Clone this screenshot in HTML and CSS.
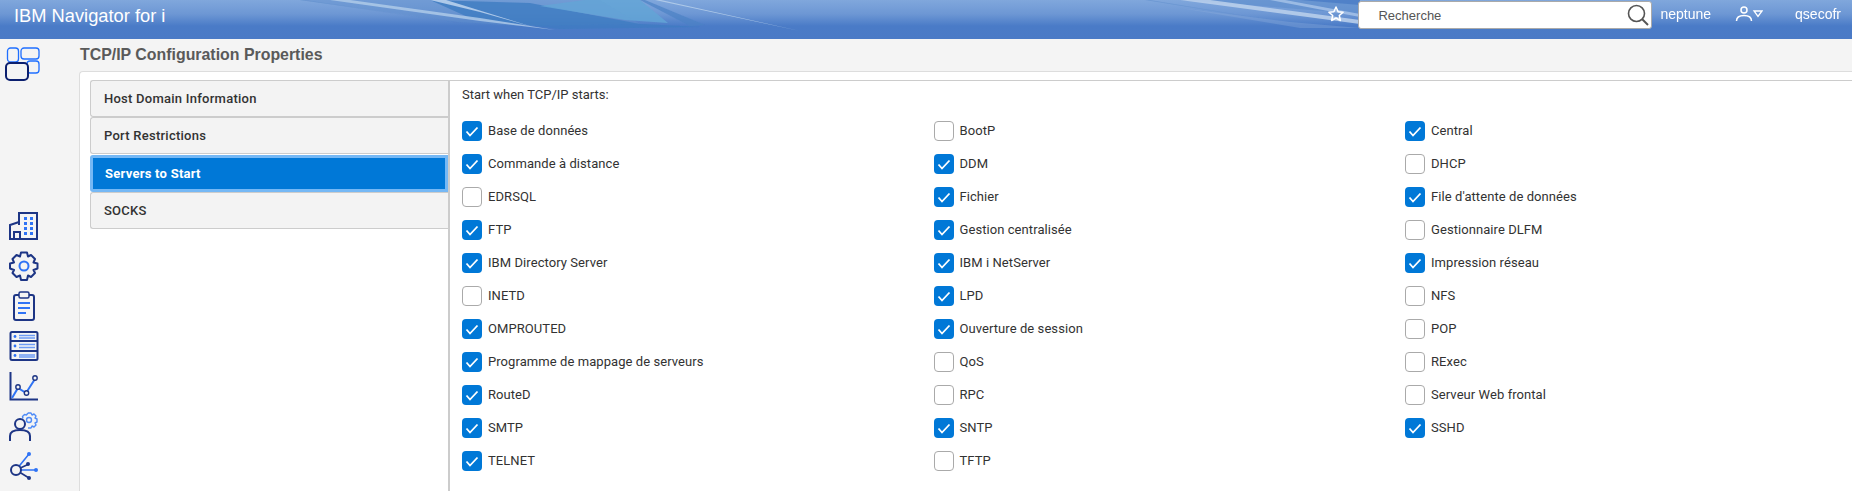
FILE: index.html
```html
<!DOCTYPE html>
<html lang="fr">
    <head>
        <meta charset="UTF-8">
        <title>IBM Navigator for i</title>
        <link rel="stylesheet" href="styles.css">
    </head>

    <body>
        <header class="topbar">
            <svg class="streaks" width="1852" height="39" viewBox="0 0 1852 39">
                <defs>
                    <filter id="soft"><feGaussianBlur stdDeviation="0.6"/></filter>
                </defs>
                <g filter="url(#soft)">
                    <polygon points="300,0 600,0 640,24 520,26 460,22" fill="#5f8fcd" opacity="0.45"/>
                    <polygon points="430,0 530,3 640,24 700,27 560,29 470,18" fill="#3f7cc2" opacity="0.8"/>
                    <polygon points="585,0 640,0 668,23 625,20 540,6" fill="#63a4d6" opacity="0.85"/>
                    <polygon points="640,0 645,0 705,25 690,26" fill="#4b82c4" opacity="0.7"/>
                    <polygon points="655,0 661,0 800,31" fill="#b4cdea" opacity="0.9"/>
                    <polygon points="430,0 446,0 533,27 480,12" fill="#c0d5ee" opacity="0.85"/>
                    <polygon points="330,0 350,0 480,18 555,30 480,21" fill="#b3cdea" opacity="0.8"/>
                    <polygon points="300,0 305,0 460,23" fill="#5f8dcb" opacity="0.5"/>
                    <polygon points="1145,0 1150,0 1300,25" fill="#5f8dcb" opacity="0.6"/>
                    <polygon points="1180,0 1360,0 1360,14 1260,6" fill="#5f8fcd" opacity="0.7"/>
                    <polygon points="1180,0 1210,0 1360,20 1360,24" fill="#bcd1ec" opacity="0.85"/>
                    <polygon points="1270,0 1285,0 1360,14 1360,17" fill="#a9c4e8" opacity="0.8"/>
                    <polygon points="1300,0 1360,0 1360,5" fill="#4a7cc5" opacity="0.8"/>
                    <polygon points="1180,8 1290,22 1360,28 1300,28" fill="#8fb0de" opacity="0.35"/>
                </g>
            </svg>
            <div class="app_title">IBM Navigator for i</div>
            <div class="top_tools">
                <svg class="star" width="18" height="18" viewBox="0 0 18 18">
                    <path d="M9 2l2.100 4.700 5 .5-3.800 3.300 1.100 5L9 13l-4.400 2.500 1.100-5L1.900 7.200l5-.5z" fill="none" stroke="#fff" stroke-width="1.500" stroke-linejoin="round"/>
                </svg>
                <div class="search">
                    <span class="search_text">Recherche</span>
                    <svg width="22" height="22" viewBox="0 0 22 22">
                        <circle cx="9.500" cy="9.500" r="8" fill="none" stroke="#555" stroke-width="1.600"/>
                        <path d="M15 15l6 6" stroke="#555" stroke-width="2"/>
                    </svg>
                </div>
                <span class="host">neptune</span>
                <svg class="user" width="28" height="18" viewBox="0 0 28 18">
                    <circle cx="9" cy="5" r="3" fill="none" stroke="#fff" stroke-width="1.500"/>
                    <path d="M1.500 16c0-4 3-5.500 7.500-5.500s7.500 1.500 7.500 5.500" fill="none" stroke="#fff" stroke-width="1.500"/>
                    <path d="M19 6h8l-4 5.500z" fill="none" stroke="#fff" stroke-width="1.300"/>
                </svg>
                <span class="username">qsecofr</span>
            </div>
        </header>

        <div class="main">
            <nav class="sidebar">
                <svg class="home_icon" width="36" height="34" viewBox="0 0 36 34">
                    <rect x="2.500" y="1" width="11" height="14" rx="3" fill="none" stroke="#1f6fff" stroke-width="1.300"/>
                    <rect x="16" y="1" width="18" height="11" rx="3" fill="none" stroke="#1f6fff" stroke-width="1.300"/>
                    <rect x="22" y="14" width="12" height="12" rx="3" fill="none" stroke="#1f6fff" stroke-width="1.300"/>
                    <rect x="1" y="16" width="22" height="17" rx="4" fill="#f4f4f4" stroke="#0b1f6e" stroke-width="2"/>
                </svg>

                <div class="tool_icons">
                    <svg width="30" height="30" viewBox="0 0 30 30">
                        <path d="M10 14V2h18v26H1V14l9-3" fill="none" stroke="#1d3585" stroke-width="2"/>
                        <path d="M5 28v-7h6v7" fill="none" stroke="#1d3585" stroke-width="2"/>
                        <g fill="#2f73f5">
                            <rect x="15" y="6" width="3" height="3"/><rect x="21" y="6" width="3" height="3"/>
                            <rect x="15" y="11" width="3" height="3"/><rect x="21" y="11" width="3" height="3"/>
                            <rect x="15" y="16" width="3" height="3"/><rect x="21" y="16" width="3" height="3"/>
                            <rect x="15" y="21" width="3" height="3"/><rect x="21" y="21" width="3" height="3"/>
                        </g>
                    </svg>
                    <svg width="30" height="30" viewBox="0 0 30 30">
                        <path d="M12 1.500h6l1 4 3-1.500 4 4-1.500 3.500 4 1v5l-4 1.500 1.500 3-4 4-3-1.500-1 4.500h-6l-1-4.500-3.500 1.500-4-4 1.500-3-4-1.500v-5l4-1-1.500-3.500 4-4 3.500 1.500z" fill="none" stroke="#1d3585" stroke-width="2" stroke-linejoin="round"/>
                        <circle cx="15" cy="15" r="4.500" fill="none" stroke="#2f73f5" stroke-width="2"/>
                    </svg>
                    <svg width="30" height="30" viewBox="0 0 30 30">
                        <rect x="5" y="4" width="20" height="25" rx="2" fill="none" stroke="#1d3585" stroke-width="2"/>
                        <rect x="10" y="1" width="10" height="6" rx="1.500" fill="#f4f4f4" stroke="#1d3585" stroke-width="1.500"/>
                        <path d="M9 12h12M9 17h12M9 22h8" stroke="#2f73f5" stroke-width="2"/>
                    </svg>
                    <svg width="30" height="30" viewBox="0 0 30 30">
                        <rect x="1.500" y="1" width="27" height="28" rx="1.500" fill="none" stroke="#1d3585" stroke-width="2"/>
                        <path d="M1.500 10h27M1.500 20h27" stroke="#1d3585" stroke-width="2"/>
                        <circle cx="6" cy="5.500" r="1.400" fill="#2f73f5"/><circle cx="6" cy="15" r="1.400" fill="#2f73f5"/><circle cx="6" cy="24.500" r="1.400" fill="#2f73f5"/>
                        <path d="M10 4.500h16M10 7h16M10 13.500h16M10 16.500h16M10 24h16M10 26h16" stroke="#6c9bf5" stroke-width="1.300"/>
                    </svg>
                    <svg width="30" height="30" viewBox="0 0 30 30">
                        <path d="M1.500 1v27.500H29" fill="none" stroke="#1d3585" stroke-width="2"/>
                        <path d="M3 27l6-10 8 5 9-14" fill="none" stroke="#2f73f5" stroke-width="2"/>
                        <circle cx="9" cy="16" r="2.200" fill="#f4f4f4" stroke="#1d3585" stroke-width="1.400"/>
                        <circle cx="17.500" cy="22" r="2.200" fill="#f4f4f4" stroke="#1d3585" stroke-width="1.400"/>
                        <circle cx="26" cy="7" r="2.200" fill="#f4f4f4" stroke="#1d3585" stroke-width="1.400"/>
                    </svg>
                    <svg width="30" height="30" viewBox="0 0 30 30">
                        <path d="M19 2l3 0 1 2 2-1 2 2-1 2 2 1v3l-2 1 1 2-2 2-2-1-1 2h-3" fill="none" stroke="#4f8cf7" stroke-width="1.400" stroke-linejoin="round"/>
                        <path d="M19 2l-1.500 2-2-.5-2 2 .5 2" fill="none" stroke="#4f8cf7" stroke-width="1.400"/>
                        <circle cx="20" cy="9" r="2.500" fill="none" stroke="#4f8cf7" stroke-width="1.400"/>
                        <circle cx="11" cy="13" r="5" fill="#f4f4f4" stroke="#1d3585" stroke-width="2"/>
                        <path d="M1 30v-5c0-4 3-6 10-6s10 2 10 6v5" fill="none" stroke="#1d3585" stroke-width="2"/>
                    </svg>
                    <svg width="30" height="30" viewBox="0 0 30 30">
                        <path d="M7 19L20 3M7 19h20" fill="none" stroke="#2f73f5" stroke-width="1.600"/>
                        <path d="M7 19l13-6M7 19l13 8" fill="none" stroke="#1d3585" stroke-width="1.600"/>
                        <circle cx="20" cy="3" r="2" fill="#2f73f5"/><circle cx="27" cy="19" r="2" fill="#2f73f5"/>
                        <circle cx="19" cy="13" r="2" fill="#1d3585"/><circle cx="20" cy="27" r="2" fill="#1d3585"/>
                        <circle cx="7" cy="19" r="5" fill="#f4f4f4" stroke="#1d3585" stroke-width="2"/>
                    </svg>
                </div>
            </nav>

            <section class="content">
                <h1 class="page_title">TCP/IP Configuration Properties</h1>
                <div class="panel">
                    <div class="tabs">
                        <div class="tab">Host Domain Information</div>
                        <div class="tab">Port Restrictions</div>
                        <div class="tab tab_active">Servers to Start</div>
                        <div class="tab">SOCKS</div>
                    </div>
                    <div class="tab_body">
                        <p class="intro">Start when TCP/IP starts:</p>
                        <div class="checks">
                            <label class="check on">Base de données</label>
                            <label class="check">BootP</label>
                            <label class="check on">Central</label>
                            <label class="check on">Commande à distance</label>
                            <label class="check on">DDM</label>
                            <label class="check">DHCP</label>
                            <label class="check">EDRSQL</label>
                            <label class="check on">Fichier</label>
                            <label class="check on">File d'attente de données</label>
                            <label class="check on">FTP</label>
                            <label class="check on">Gestion centralisée</label>
                            <label class="check">Gestionnaire DLFM</label>
                            <label class="check on">IBM Directory Server</label>
                            <label class="check on">IBM i NetServer</label>
                            <label class="check on">Impression réseau</label>
                            <label class="check">INETD</label>
                            <label class="check on">LPD</label>
                            <label class="check">NFS</label>
                            <label class="check on">OMPROUTED</label>
                            <label class="check on">Ouverture de session</label>
                            <label class="check">POP</label>
                            <label class="check on">Programme de mappage de serveurs</label>
                            <label class="check">QoS</label>
                            <label class="check">RExec</label>
                            <label class="check on">RouteD</label>
                            <label class="check">RPC</label>
                            <label class="check">Serveur Web frontal</label>
                            <label class="check on">SMTP</label>
                            <label class="check on">SNTP</label>
                            <label class="check on">SSHD</label>
                            <label class="check on">TELNET</label>
                            <label class="check">TFTP</label>
                        </div>
                    </div>
                </div>
            </section>
        </div>
    </body>
</html>
```

FILE: styles.css
```css
@charset "UTF-8";
html, body {
    height: 100%;
    overflow: hidden;
}
body {
    margin: 0;
    background-color: #f4f4f4;
    font-family: Roboto, "Liberation Sans", sans-serif;
    color: #323232;
    display: flex;
    flex-direction: column;
}

/* top bar */
.topbar {
    position: relative;
    height: 39px;
    flex: none;
    display: flex;
    justify-content: space-between;
    background: linear-gradient(#80a7dc 0, #6d97d4 14px, #4a7bc7 26px, #4a7ac6 100%);
    color: #fff;
    font-family: "Liberation Sans", Arial, sans-serif;
}
.streaks {
    position: absolute;
    left: 0;
    top: 0;
}
.app_title {
    position: relative;
    padding: 5px 0 0 14px;
    font-size: 18.300px;
    line-height: 22px;
}
.top_tools {
    position: relative;
    display: flex;
    align-items: flex-start;
    font-size: 14px;
}
.star {
    margin: 5px 13px 0 0;
}
.search {
    box-sizing: border-box;
    width: 294px;
    height: 28px;
    margin-top: 1px;
    padding: 0 2px 0 19px;
    background: #fff;
    border: 1px solid #aaa;
    border-radius: 3px;
    display: flex;
    align-items: center;
    justify-content: space-between;
    font-size: 13px;
    color: #555;
}
.host {
    margin: 5px 0 0 8px;
    line-height: 18px;
}
.user {
    margin: 5px 0 0 24px;
}
.username {
    margin: 5px 11px 0 32px;
    line-height: 18px;
}

/* left icons */
.main {
    flex: 1;
    display: flex;
    min-height: 0;
}
.sidebar {
    box-sizing: border-box;
    width: 79px;
    flex: none;
    padding: 8px 0 0 5px;
}
.home_icon {
    display: block;
}
.tool_icons {
    margin: 130px 0 0 4px;
    display: flex;
    flex-direction: column;
    gap: 10px;
}
.tool_icons svg {
    display: block;
}

/* page */
.content {
    flex: 1;
    min-width: 0;
    display: flex;
    flex-direction: column;
}
.page_title {
    margin: 0;
    padding: 6px 0 0 1px;
    height: 26px;
    font-family: "Liberation Sans", Arial, sans-serif;
    font-size: 15.900px;
    line-height: 20px;
    font-weight: bold;
    color: #5a5a5a;
}
.panel {
    flex: 1;
    display: flex;
    align-items: flex-start;
    background: #fff;
    border-top: 1px solid #ddd;
    border-left: 1px solid #ddd;
    padding: 8px 0 0 10px;
    border-top-left-radius: 4px;
}
.tabs {
    width: 358px;
    flex: none;
}
.tab {
    box-sizing: border-box;
    height: 37px;
    padding-left: 13px;
    background: #f3f3f3;
    border: 1px solid #ccc;
    border-right: 0;
    border-radius: 3px 0 0 3px;
    font-size: 13px;
    font-weight: 500;
    letter-spacing: 0.250px;
    line-height: 35px;
    color: #323232;
}
.tab_active {
    height: 37px;
    margin-top: 1px;
    padding-left: 12px;
    background: #0078d7;
    border: 3px solid #75b8f5;
    line-height: 31px;
    font-weight: bold;
    color: #fff;
}
.tab_body {
    flex: 1;
    align-self: stretch;
    border-top: 1px solid #ccc;
    border-left: 2px solid #ccc;
    padding: 5px 0 0 12px;
}
.intro {
    margin: 0 0 18px 0;
    font-size: 13px;
    line-height: 17px;
}
.checks {
    display: grid;
    grid-template-columns: repeat(3, 471.500px);
    grid-auto-rows: 33px;
}
.check {
    display: flex;
    align-items: flex-start;
    font-size: 13px;
    letter-spacing: 0.070px;
    line-height: 19px;
}
.check::before {
    content: "";
    box-sizing: border-box;
    width: 20px;
    height: 20px;
    margin-right: 6px;
    flex: none;
    border: 1px solid #aaa;
    border-radius: 4px;
    background: #fff;
}
.check.on::before {
    border: 0;
    background: #0078d7 url("data:image/svg+xml,%3Csvg xmlns='http://www.w3.org/2000/svg' width='20' height='20'%3E%3Cpath d='M4.500 10.500L8 14.500L15.500 6.500' fill='none' stroke='white' stroke-width='1.800'/%3E%3C/svg%3E");
}
```
